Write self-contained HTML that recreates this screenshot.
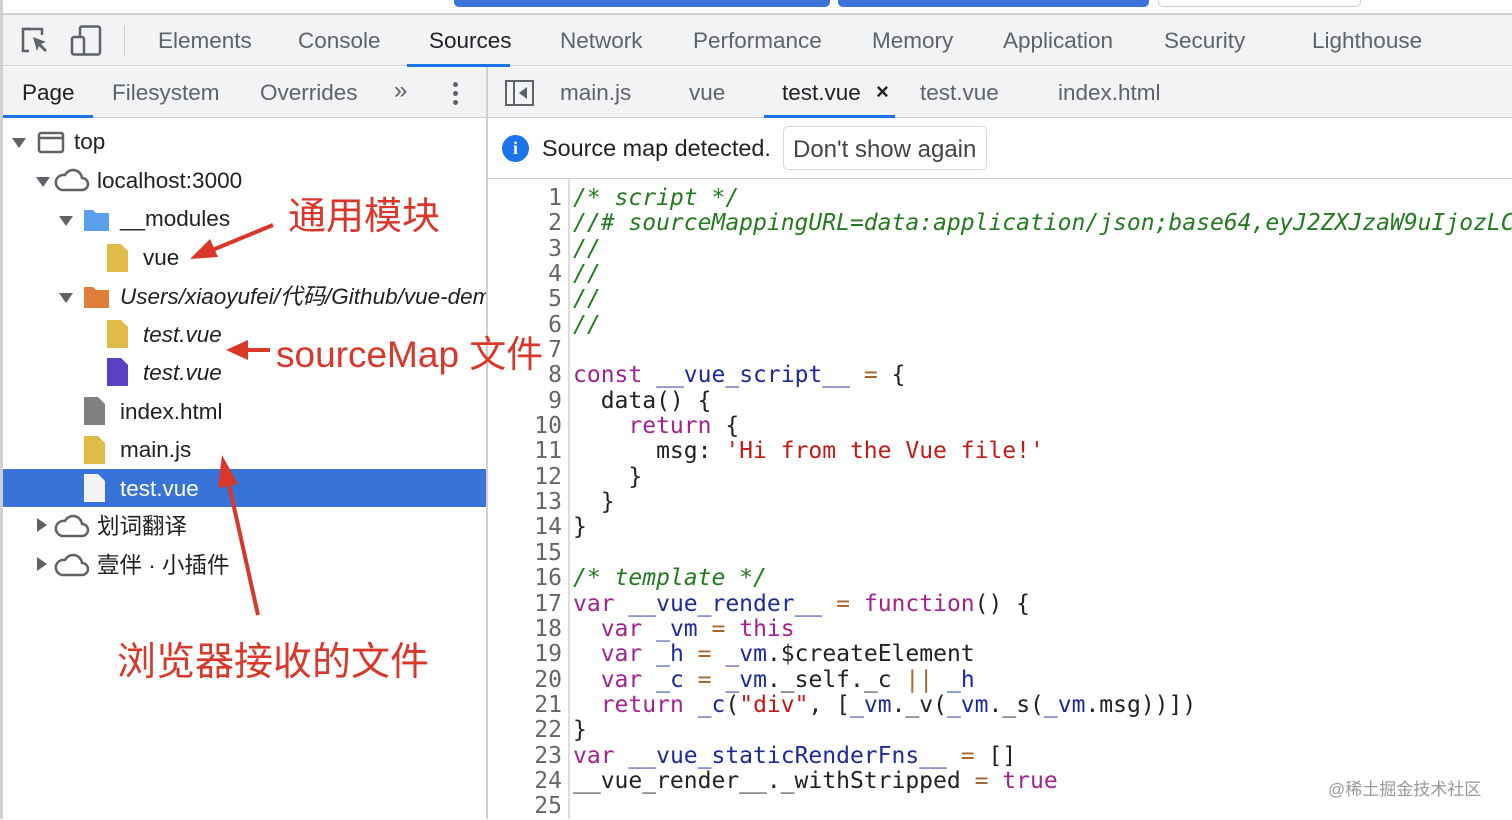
<!DOCTYPE html>
<html><head><meta charset="utf-8"><style>
*{margin:0;padding:0;box-sizing:border-box}
body{width:1512px;height:819px;overflow:hidden;background:#fff;font-family:"Liberation Sans","Noto Sans CJK SC",sans-serif;color:#202124;position:relative}
.abs{position:absolute}
.t{position:absolute;font-size:22.5px;white-space:nowrap;line-height:26px}
.codewrap{position:absolute;left:571px;top:179px;width:941px;height:640px;overflow:hidden}
.code{position:absolute;left:2px;top:7px;font-family:"DejaVu Sans Mono",monospace;font-size:23px;line-height:25.35px;white-space:pre;color:#222}
.gut{position:absolute;left:500px;width:62px;top:186px;font-family:"DejaVu Sans Mono",monospace;font-size:23px;line-height:25.35px;text-align:right;color:#666;white-space:pre}
.c{color:#237a1f;font-style:italic}.k{color:#a3228f}.v{color:#1c2a9c}.o{color:#a8662a}.s{color:#c41a16}
.red{color:#d8372a;font-family:"Liberation Sans","Noto Sans CJK SC",sans-serif;position:absolute;white-space:nowrap}
</style></head><body>
<div class="abs" style="left:454px;top:0;width:376px;height:7px;background:#3b73d9;border-radius:0 0 5px 5px"></div>
<div class="abs" style="left:838px;top:0;width:311px;height:7px;background:#3b73d9;border-radius:0 0 5px 5px"></div>
<div class="abs" style="left:1158px;top:0;width:203px;height:7px;border:1px solid #ccc;border-top:none;border-radius:0 0 5px 5px"></div>
<div class="abs" style="left:0;top:13px;width:1512px;height:2px;background:#d0d0d0"></div>
<div class="abs" style="left:0;top:0;width:3px;height:819px;background:#d0d0d0"></div>
<div class="abs" style="left:3px;top:15px;width:1509px;height:51px;background:#f1f3f4;border-bottom:1px solid #cfcfcf"></div>
<svg class="abs" style="left:20px;top:26px" width="32" height="30" viewBox="0 0 32 30"><path d="M10 3H3v22h6" fill="none" stroke="#5f6368" stroke-width="2.5"/><path d="M3 3h19v6" fill="none" stroke="#5f6368" stroke-width="2.5"/><path d="M13 11l13 5-5 2 6 6-2 2-6-6-2 5z" fill="#5f6368"/></svg>
<svg class="abs" style="left:70px;top:25px" width="32" height="32" viewBox="0 0 32 32"><rect x="10" y="1.5" width="20" height="28" rx="2" fill="none" stroke="#5f6368" stroke-width="2.5"/><rect x="2" y="12" width="12" height="17.5" rx="2" fill="#f1f3f4" stroke="#5f6368" stroke-width="2.5"/></svg>
<div class="abs" style="left:124px;top:26px;width:1px;height:30px;background:#ccc"></div>
<div class="t" style="left:158px;top:28px;color:#5f6368">Elements</div>
<div class="t" style="left:298px;top:28px;color:#5f6368">Console</div>
<div class="t" style="left:429px;top:28px;color:#202124">Sources</div>
<div class="t" style="left:560px;top:28px;color:#5f6368">Network</div>
<div class="t" style="left:693px;top:28px;color:#5f6368">Performance</div>
<div class="t" style="left:872px;top:28px;color:#5f6368">Memory</div>
<div class="t" style="left:1003px;top:28px;color:#5f6368">Application</div>
<div class="t" style="left:1164px;top:28px;color:#5f6368">Security</div>
<div class="t" style="left:1312px;top:28px;color:#5f6368">Lighthouse</div>
<div class="abs" style="left:407px;top:64px;width:103px;height:3px;background:#1a73e8"></div>
<div class="abs" style="left:3px;top:67px;width:484px;height:51px;background:#f1f3f4;border-bottom:1px solid #cfcfcf"></div>
<div class="t" style="left:22px;top:80px">Page</div>
<div class="t" style="left:112px;top:80px;color:#5f6368">Filesystem</div>
<div class="t" style="left:260px;top:80px;color:#5f6368">Overrides</div>
<div class="t" style="left:394px;top:78px;color:#5f6368;font-size:24px">»</div>
<div class="abs" style="left:453px;top:82px;width:5px;height:5px;border-radius:50%;background:#5f6368;box-shadow:0 9px 0 #5f6368,0 18px 0 #5f6368"></div>
<div class="abs" style="left:3px;top:115px;width:90px;height:3px;background:#1a73e8"></div>
<div class="abs" style="left:486px;top:67px;width:2px;height:752px;background:#d0d0d0"></div>
<div class="abs" style="left:488px;top:67px;width:1024px;height:51px;background:#f1f3f4;border-bottom:1px solid #cfcfcf"></div>
<svg class="abs" style="left:505px;top:80px" width="30" height="27"><rect x="1" y="1" width="27" height="24" fill="none" stroke="#5f6368" stroke-width="2"/><line x1="9" y1="1" x2="9" y2="25" stroke="#5f6368" stroke-width="2"/><path d="M22 7v12l-8-6z" fill="#5f6368"/></svg>
<div class="t" style="left:560px;top:80px;color:#5f6368">main.js</div>
<div class="t" style="left:689px;top:80px;color:#5f6368">vue</div>
<div class="t" style="left:782px;top:80px">test.vue</div>
<div class="t" style="left:876px;top:79px;font-size:22px;font-weight:bold">×</div>
<div class="t" style="left:920px;top:80px;color:#5f6368">test.vue</div>
<div class="t" style="left:1058px;top:80px;color:#5f6368">index.html</div>
<div class="abs" style="left:764px;top:115px;width:131px;height:3px;background:#1a73e8"></div>
<div class="abs" style="left:488px;top:178px;width:1024px;height:1px;background:#d0d0d0"></div>
<div class="abs" style="left:502px;top:135px;width:27px;height:27px;border-radius:50%;background:#1a73e8;color:#fff;font-weight:bold;font-size:18px;text-align:center;line-height:27px;font-family:'Liberation Serif',serif">i</div>
<div class="t" style="left:542px;top:135px;font-size:23.4px">Source map detected.</div>
<div class="abs" style="left:783px;top:126px;width:204px;height:44px;border:1px solid #d6d6d6;border-radius:5px"></div>
<div class="t" style="left:793px;top:137px;color:#444;font-size:24px">Don't show again</div>
<div class="abs" style="left:568px;top:179px;width:2px;height:640px;background:#ddd"></div>
<div class="gut">1
2
3
4
5
6
7
8
9
10
11
12
13
14
15
16
17
18
19
20
21
22
23
24
25</div>
<div class="codewrap"><div class="code"><span class="c">/* script */</span>
<span class="c">//# sourceMappingURL=data:application/json;base64,eyJ2ZXJzaW9uIjozLCJzb3VyY2VzIjpb</span>
<span class="c">//</span>
<span class="c">//</span>
<span class="c">//</span>
<span class="c">//</span>

<span class="k">const</span> <span class="v">__vue_script__</span> <span class="o">=</span> {
  data() {
    <span class="k">return</span> {
      msg: <span class="s">'Hi from the Vue file!'</span>
    }
  }
}

<span class="c">/* template */</span>
<span class="k">var</span> <span class="v">__vue_render__</span> <span class="o">=</span> <span class="k">function</span>() {
  <span class="k">var</span> <span class="v">_vm</span> <span class="o">=</span> <span class="k">this</span>
  <span class="k">var</span> <span class="v">_h</span> <span class="o">=</span> <span class="v">_vm</span>.$createElement
  <span class="k">var</span> <span class="v">_c</span> <span class="o">=</span> <span class="v">_vm</span>._self._c <span class="o">||</span> <span class="v">_h</span>
  <span class="k">return</span> <span class="v">_c</span>(<span class="s">"div"</span>, [<span class="v">_vm</span>._v(<span class="v">_vm</span>._s(<span class="v">_vm</span>.msg))])
}
<span class="k">var</span> <span class="v">__vue_staticRenderFns__</span> <span class="o">=</span> []
__vue_render__._withStripped <span class="o">=</span> <span class="k">true</span>
</div></div>
<div class="abs" style="left:1328px;top:775px;font-size:17px;color:#999;font-family:'Liberation Sans','Noto Sans CJK SC',sans-serif">@稀土掘金技术社区</div>
<div class="abs" style="left:3px;top:469px;width:483px;height:38px;background:#3874d8"></div>
<svg class="abs" style="left:0;top:120px" width="486" height="470">
<g fill="#5f6368">
<path d="M12 18h14l-7 10z"/><path d="M36 57h14l-7 10z"/><path d="M59 96h14l-7 10z"/><path d="M59 173h14l-7 10z"/>
<path d="M37 398v14l10-7z"/><path d="M37 437v14l10-7z"/>
</g>
<rect x="39" y="13" width="24" height="19" rx="2" fill="none" stroke="#5f6368" stroke-width="2.5"/>
<line x1="39" y1="18" x2="63" y2="18" stroke="#5f6368" stroke-width="2.5"/>
<g fill="none" stroke="#5f6368" stroke-width="2.5">
<path d="M62 70h20a6 6 0 0 0 0-12a9 9 0 0 0-17-3a7 7 0 0 0-3 15z"/>
<path d="M62 416h20a6 6 0 0 0 0-12a9 9 0 0 0-17-3a7 7 0 0 0-3 15z"/>
<path d="M62 455h20a6 6 0 0 0 0-12a9 9 0 0 0-17-3a7 7 0 0 0-3 15z"/>
</g>
<path d="M84 90h9l3 3h13v18H84z" fill="#5aa0ec"/>
<path d="M84 167h9l3 3h13v18H84z" fill="#e07f3a"/>
<g>
<path d="M107 124h14l7 7v21h-21z" fill="#e0bb48"/>
<path d="M107 200h14l7 7v21h-21z" fill="#e0bb48"/>
<path d="M107 238h14l7 7v21h-21z" fill="#5b3fc4"/>
<path d="M84 277h14l7 7v21h-21z" fill="#808080"/>
<path d="M84 316h14l7 7v21h-21z" fill="#e0bb48"/>
<path d="M84 354h14l7 7v21h-21z" fill="#f4f4f4"/>
</g>
</svg>
<div class="t" style="left:74px;top:129px">top</div>
<div class="t" style="left:97px;top:168px">localhost:3000</div>
<div class="t" style="left:120px;top:206px">__modules</div>
<div class="t" style="left:143px;top:245px">vue</div>
<div class="t" style="left:120px;top:284px;font-style:italic;width:366px;overflow:hidden">Users/xiaoyufei/代码/Github/vue-demo</div>
<div class="t" style="left:143px;top:322px;font-style:italic">test.vue</div>
<div class="t" style="left:143px;top:360px;font-style:italic">test.vue</div>
<div class="t" style="left:120px;top:399px">index.html</div>
<div class="t" style="left:120px;top:437px">main.js</div>
<div class="t" style="left:120px;top:476px;color:#fff">test.vue</div>
<div class="t" style="left:97px;top:514px">划词翻译</div>
<div class="t" style="left:97px;top:553px">壹伴 · 小插件</div>
<div class="red" style="left:288px;top:185px;font-size:38px">通用模块</div>
<div class="red" style="left:276px;top:324px;font-size:37px">sourceMap 文件</div>
<div class="red" style="left:117px;top:631px;font-size:39px">浏览器接收的文件</div>
<svg class="abs" style="left:0;top:0" width="560" height="819">
<g stroke="#d8372a" stroke-width="4" fill="#d8372a">
<line x1="273" y1="225" x2="210" y2="251"/>
<path d="M190 259l20-20 8 18z" stroke="none"/>
<line x1="270" y1="350" x2="245" y2="350"/>
<path d="M226 350l22-10v20z" stroke="none"/>
<line x1="258" y1="615" x2="228" y2="480"/>
<path d="M222 455l16 29-20 4z" stroke="none"/>
</g>
</svg>
</body></html>
